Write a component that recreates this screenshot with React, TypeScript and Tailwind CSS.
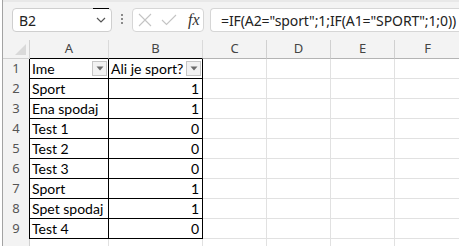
import React from 'react';

const rows: [string, number][] = [
  ['Sport', 1],
  ['Ena spodaj', 1],
  ['Test 1', 0],
  ['Test 2', 0],
  ['Test 3', 0],
  ['Sport', 1],
  ['Spet spodaj', 1],
  ['Test 4', 0],
];

const uiFont = { fontFamily: '"Noto Sans", "Open Sans", sans-serif' };
const cellFont = { fontFamily: 'Lato, "Liberation Sans", sans-serif' };

function FilterButton() {
  return (
    <div className="w-[15px] h-[15px] border border-[#c6c6c6] bg-[#f2f2f2] flex items-center justify-center shrink-0">
      <svg width="8" height="5" viewBox="0 0 8 5">
        <path d="M0.5 0.5 L7.5 0.5 L4 4.5 Z" fill="#6b6b6b" />
      </svg>
    </div>
  );
}

function EmptyCells() {
  return (
    <>
      <div className="w-[64px] h-[20px] border-b border-r border-[#e1e1e1] shrink-0" />
      <div className="w-[64px] h-[20px] border-b border-r border-[#e1e1e1] shrink-0" />
      <div className="w-[64px] h-[20px] border-b border-r border-[#e1e1e1] shrink-0" />
      <div className="w-[65px] h-[20px] border-b border-[#e1e1e1] shrink-0" />
    </>
  );
}

export default function App() {
  return (
    <div className="w-[459px] h-[246px] overflow-hidden bg-white pl-[2px]">
      <div className="h-full border-l border-[#a3a3a3] flex flex-col">
        {/* formula bar */}
        <div className="h-[40px] bg-[#f3f3f3] border-t-2 border-[#e8e8e8] flex items-start pt-[6px] shrink-0">
          <div className="relative ml-[9px] w-[100px] h-[24px] bg-white border border-[#cfcfcf] rounded-[4px] flex items-center justify-between pl-[6px] pr-[5px]">
            <div className="absolute -top-px right-[2px] w-[16px] h-[1px] bg-black" />
            <span className="text-[14px] text-[#222]" style={uiFont}>B2</span>
            <svg width="10" height="6" viewBox="0 0 10 6">
              <path d="M1 1 L5 5 L9 1" fill="none" stroke="#555" strokeWidth="1.2" />
            </svg>
          </div>
          <div className="ml-[9px] mt-[6px] flex flex-col gap-[2px]">
            <div className="w-[2px] h-[2px] bg-[#8a8a8a]" />
            <div className="w-[2px] h-[2px] bg-[#8a8a8a]" />
            <div className="w-[2px] h-[2px] bg-[#8a8a8a]" />
          </div>
          <div className="ml-[9px] w-[72px] h-[24px] bg-white border border-[#d6d6d6] rounded-[4px] flex items-center pl-[5px]">
            <svg width="14" height="14" viewBox="0 0 14 14">
              <path d="M1 1 L13 13 M13 1 L1 13" stroke="#c4c4c4" strokeWidth="1.1" />
            </svg>
            <svg className="ml-[9px]" width="16" height="12" viewBox="0 0 16 12">
              <path d="M1 6 L5.5 10.5 L15 1" fill="none" stroke="#c4c4c4" strokeWidth="1.1" />
            </svg>
            <span
              className="ml-[11px] text-[16px] italic text-[#333] leading-none"
              style={{ fontFamily: '"Liberation Serif", "DejaVu Serif", serif' }}
            >
              fx
            </span>
          </div>
          <div className="ml-[6px] flex-1 h-[24px] bg-white border border-r-0 border-[#d6d6d6] rounded-l-[4px] flex items-center pl-[10px] whitespace-nowrap overflow-hidden">
            <span className="text-[14px] text-[#222] tracking-[-0.1px]" style={uiFont}>
              =IF(A2="sport";1;IF(A1="SPORT";1;0))
            </span>
          </div>
        </div>

        {/* column headers */}
        <div className="flex h-[19px] bg-[#f3f3f3] shrink-0 text-[13px] text-[#444]" style={uiFont}>
          <div className="relative w-[27px] h-full border-r border-b border-[#d0d0d0] shrink-0">
            <svg className="absolute right-[3px] bottom-[3px]" width="11" height="11" viewBox="0 0 11 11">
              <path d="M11 0 L11 11 L0 11 Z" fill="#d9d9d9" />
            </svg>
          </div>
          <div className="w-[79px] h-full border-r border-[#dadada] border-b border-b-black flex items-center justify-center shrink-0">A</div>
          <div className="w-[94px] h-full border-r border-[#dadada] border-b border-b-black flex items-center justify-center shrink-0">B</div>
          <div className="w-[64px] h-full border-r border-b border-[#d0d0d0] border-b-[#b4b4b4] flex items-center justify-center shrink-0">C</div>
          <div className="w-[64px] h-full border-r border-b border-[#d0d0d0] border-b-[#b4b4b4] flex items-center justify-center shrink-0">D</div>
          <div className="w-[64px] h-full border-r border-b border-[#d0d0d0] border-b-[#b4b4b4] flex items-center justify-center shrink-0">E</div>
          <div className="w-[65px] h-full border-b border-[#b4b4b4] flex items-center justify-center shrink-0">F</div>
        </div>

        {/* row 1: table header */}
        <div className="flex h-[20px] shrink-0">
          <div className="w-[27px] h-full border-r border-r-black bg-[#f3f3f3] flex items-center justify-center text-[13px] text-[#555] shrink-0" style={uiFont}>1</div>
          <div className="w-[79px] h-full border-r border-b border-black flex items-center justify-between pl-[2px] pr-[1px] text-[14px] text-black shrink-0" style={cellFont}>
            <span>Ime</span>
            <FilterButton />
          </div>
          <div className="w-[94px] h-full border-r border-b border-black flex items-center justify-between pl-[2px] pr-[1px] text-[14px] text-black shrink-0" style={cellFont}>
            <span className="whitespace-nowrap">Ali je sport?</span>
            <FilterButton />
          </div>
          <EmptyCells />
        </div>

        {rows.map(([name, val], i) => (
          <div key={i} className="flex h-[20px] shrink-0">
            <div className="w-[27px] h-full border-r border-r-black bg-[#f3f3f3] flex items-center justify-center text-[13px] text-[#555] shrink-0" style={uiFont}>
              {i + 2}
            </div>
            <div className="w-[79px] h-full border-r border-b border-black flex items-center pl-[2px] text-[14px] text-black whitespace-nowrap shrink-0" style={cellFont}>
              {name}
            </div>
            <div className="w-[94px] h-full border-r border-b border-black flex items-center justify-end pr-[3px] text-[14px] text-black shrink-0" style={cellFont}>
              {val}
            </div>
            <EmptyCells />
          </div>
        ))}

        {/* row 10 partially visible */}
        <div className="flex h-[20px] shrink-0">
          <div className="w-[27px] h-full border-r border-[#d0d0d0] bg-[#f3f3f3] shrink-0" />
          <div className="w-[79px] h-full border-r border-[#e1e1e1] shrink-0" />
          <div className="w-[94px] h-full border-r border-[#e1e1e1] shrink-0" />
          <EmptyCells />
        </div>
      </div>
    </div>
  );
}
